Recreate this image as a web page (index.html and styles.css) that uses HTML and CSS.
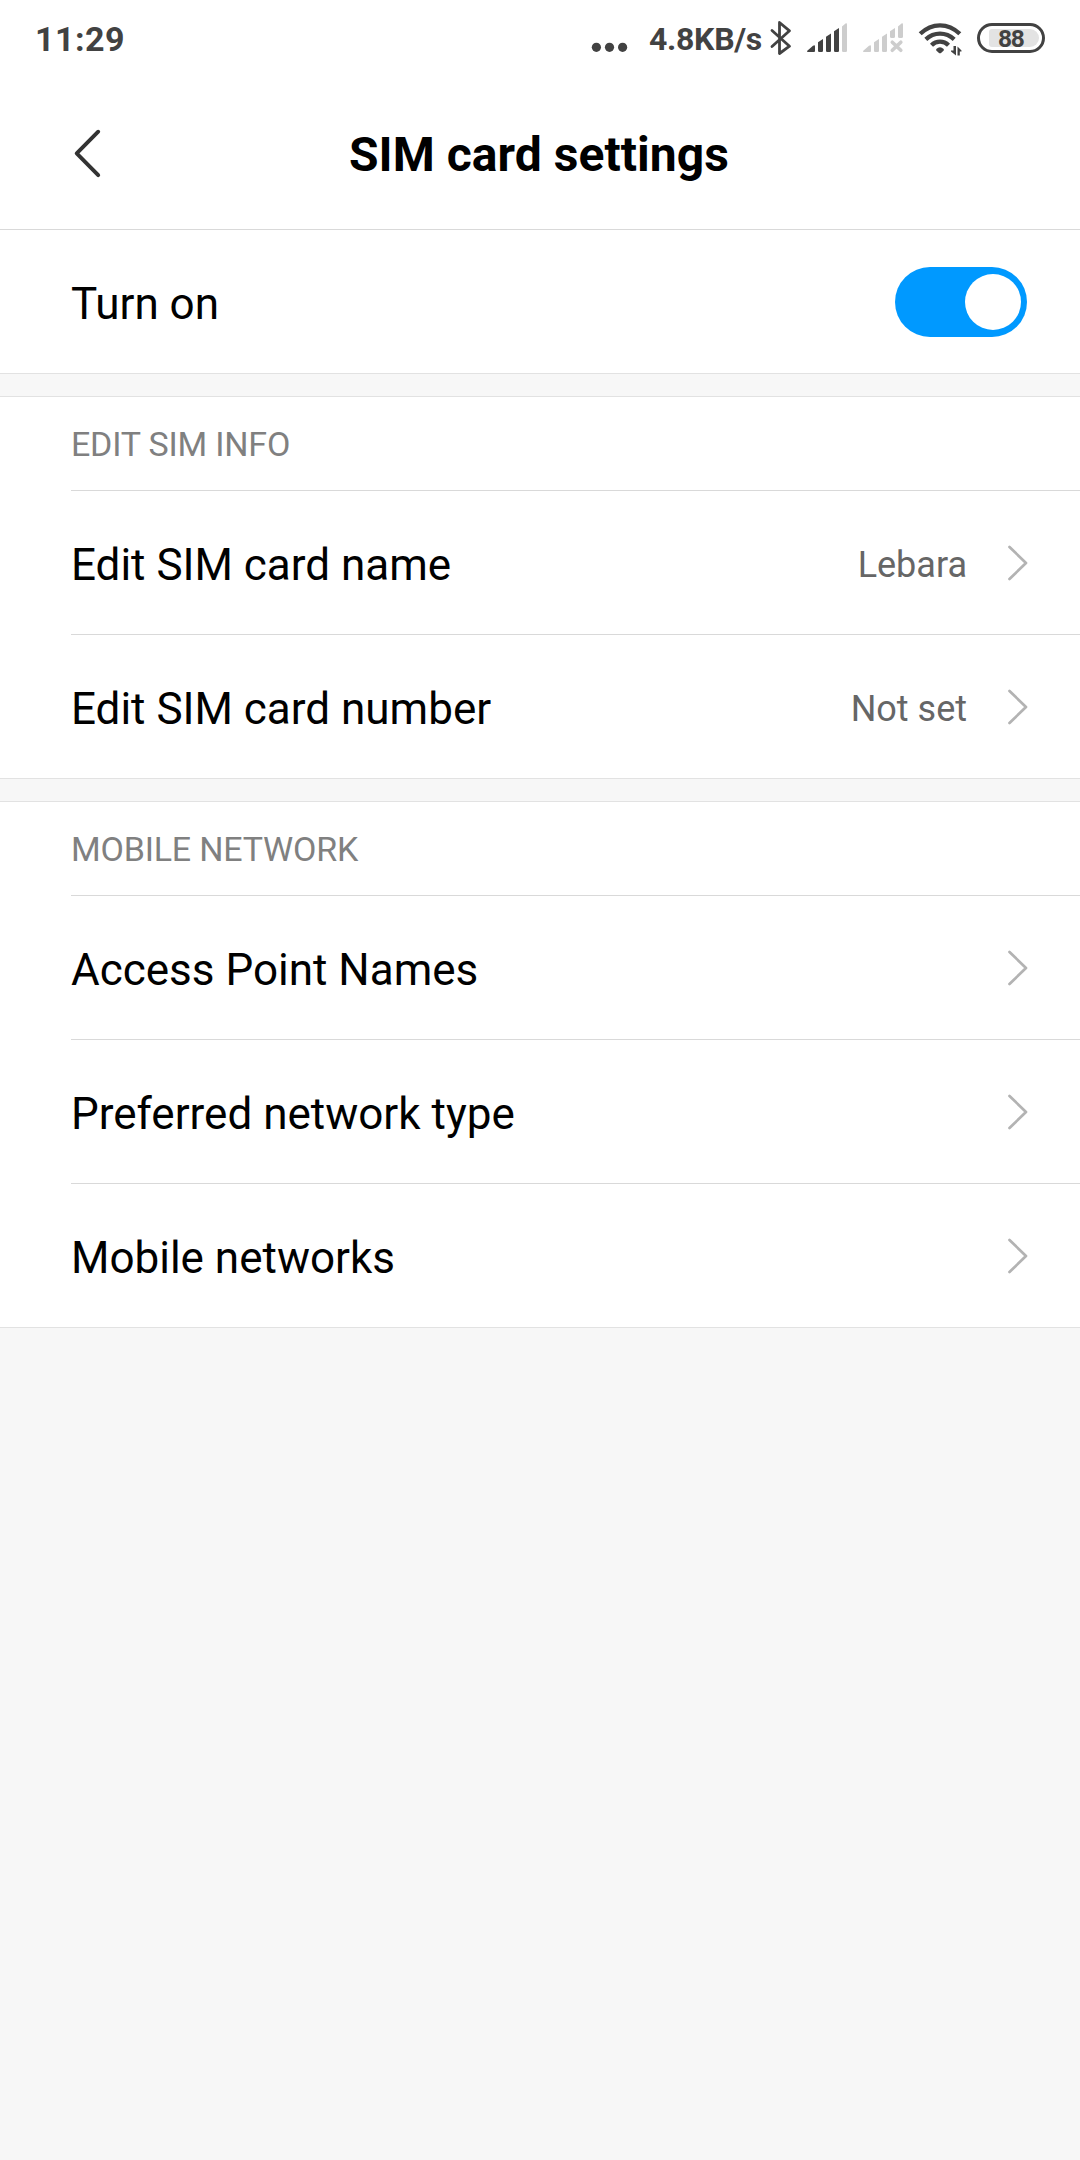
FILE: index.html
```html
<!DOCTYPE html>
<html lang="en">
<head>
<meta charset="utf-8">
<title>SIM card settings</title>
<link rel="stylesheet" href="styles.css">
</head>
<body>
<header class="top">
  <div class="status">
    <span class="time">11:29</span>
    <svg class="dots" viewBox="590 0 40 76" width="40" height="76"><g fill="#424242"><circle cx="596.4" cy="47.3" r="4.6"/><circle cx="609.5" cy="47.3" r="4.6"/><circle cx="622.6" cy="47.3" r="4.6"/></g></svg>
    <span class="speed">4.8KB/s</span>
    <svg viewBox="768 0 26 76" width="26" height="76"><path d="M772 30.500L789.500 46.200L779.500 53.500V22.500L789.500 30.800L772 46.500" fill="none" stroke="#424242" stroke-width="2.8" stroke-linejoin="round" stroke-linecap="round"/></svg>
    <svg class="signal" viewBox="806 0 42 76" width="42" height="76"><g fill="#424242"><path d="M807 51L813 45.8Q815 44.3 815 46.500V51Q815 52 814 52H807.800Q807 52 807 51Z"/><path d="M818 42.200L823 39V50.800Q823 52 821.800 52H819.200Q818 52 818 50.800Z"/><path d="M826 36.800L831 33.600V50.800Q831 52 829.800 52H827.200Q826 52 826 50.800Z"/><path d="M834 31.200L839 28V50.800Q839 52 837.800 52H835.200Q834 52 834 50.800Z"/></g><path fill="#cdcdcd" d="M842 26.500L845.500 23.500Q847 22.700 847 24.500V50.800Q847 52 845.800 52H843.200Q842 52 842 50.800Z"/></svg>
    <svg class="signal-off" viewBox="862 0 42 76" width="42" height="76"><g fill="#cdcdcd"><path d="M863 51L869 45.800Q871 44.300 871 46.500V51Q871 52 870 52H863.800Q863 52 863 51Z"/><path d="M874 42.200L879 39V50.800Q879 52 877.800 52H875.200Q874 52 874 50.800Z"/><path d="M882 36.800L887 33.600V50.800Q887 52 885.800 52H883.200Q882 52 882 50.800Z"/><path d="M890 31.200L895 28V36.500Q895 38 893.500 38H891.500Q890 38 890 36.500Z"/><path d="M898 26.500L901.500 23.500Q903 22.700 903 24.500V36.500Q903 38 901.500 38H899.500Q898 38 898 36.500Z"/></g><path d="M892.300 42.200L900.800 50.300M900.800 42.200L892.300 50.300" stroke="#cdcdcd" stroke-width="3.600" stroke-linecap="round"/></svg>
    <svg class="wifi" viewBox="918 0 46 76" width="46" height="76"><g fill="none" stroke="#424242" stroke-width="4.300"><path d="M920.200 33.800Q929 25.300 940 25.300T959.800 33.800"/><path d="M925.800 39.300Q932 33.600 940 33.600T954.200 39.300"/><path d="M931.500 45.200Q935 41.700 940 41.700T948.500 45.200"/></g><path fill="#424242" d="M936.300 49Q940 45.500 943.700 49Q944.200 50 943.500 50.700L941.300 52.700Q940 53.700 938.700 52.700L936.500 50.700Q935.800 50 936.300 49Z"/><path fill="#424242" d="M953.500 46H956V55.500L951 51.500V50.500H953.500ZM957.500 46.500L961.500 50.500V51.500H959.800V55.500H957.500Z"/></svg>
    <span class="battery"><span class="level">88</span></span>
  </div>
  <div class="titlebar">
    <svg class="back" viewBox="70 120 34 66" width="34" height="66"><path d="M98.200 131.700L76.700 153.400L98.200 175.200" fill="none" stroke="#333" stroke-width="3.900" stroke-linecap="round" stroke-linejoin="round"/></svg>
    <h1>SIM card settings</h1>
  </div>
</header>
<main>
  <section class="group">
    <div class="row"><span class="label">Turn on</span><span class="switch"><span class="knob"></span></span></div>
  </section>
  <section class="group">
    <h2>EDIT SIM INFO</h2>
    <div class="row lined"><span class="label">Edit SIM card name</span><span class="value">Lebara</span><svg class="chevron" viewBox="0 0 20 36" width="20" height="36"><path d="M2.500 2L19 18L2.500 34"/></svg></div>
    <div class="row lined"><span class="label">Edit SIM card number</span><span class="value">Not set</span><svg class="chevron" viewBox="0 0 20 36" width="20" height="36"><path d="M2.500 2L19 18L2.500 34"/></svg></div>
  </section>
  <section class="group">
    <h2>MOBILE NETWORK</h2>
    <div class="row lined"><span class="label">Access Point Names</span><svg class="chevron" viewBox="0 0 20 36" width="20" height="36"><path d="M2.500 2L19 18L2.500 34"/></svg></div>
    <div class="row lined"><span class="label">Preferred network type</span><svg class="chevron" viewBox="0 0 20 36" width="20" height="36"><path d="M2.500 2L19 18L2.500 34"/></svg></div>
    <div class="row lined"><span class="label">Mobile networks</span><svg class="chevron" viewBox="0 0 20 36" width="20" height="36"><path d="M2.500 2L19 18L2.500 34"/></svg></div>
  </section>
</main>
</body>
</html>
```
FILE: styles.css
```css
* { box-sizing: border-box; }
body { margin: 0; min-height: 2160px; background: #f7f7f7; color: #000; font-family: Roboto, sans-serif; }
h1, h2 { margin: 0; }
svg { display: block; flex: none; overflow: visible; }
.top { height: 230px; background: #fff; border-bottom: 1px solid #d9d9d9; }
.status { display: flex; height: 76px; padding: 0 35px 0 35px; color: #424242; font-weight: 700; line-height: 76px; white-space: nowrap; }
.time { flex: 1; font-size: 34px; letter-spacing: 0.500px; padding-top: 1px; }
.speed { width: 119px; margin-left: 19px; font-size: 32px; letter-spacing: -0.300px; padding-top: 1px; }
.signal { margin-left: 12px; }
.signal-off { margin-left: 14px; }
.wifi { margin-left: 14px; }
.battery { display: flex; width: 68px; height: 30px; margin: 23px 0 0 13px; padding: 3px; border: 3px solid #424242; border-radius: 15px; }
.level { flex: 1; margin: 0 0 0 6px; border-radius: 3px 9px 9px 3px; background: #e3e3e3; font-size: 24.500px; line-height: 19px; padding-left: 9px; letter-spacing: -1.300px; }
.titlebar { display: grid; grid-template-columns: 70px 34px 1fr 104px; height: 153px; align-items: start; padding-top: 44px; }
.back { grid-column: 2; }
h1 { grid-column: 3; font-size: 48px; line-height: 70px; letter-spacing: 0.060px; text-align: center; padding-right: 2px; }
.group { background: #fff; border-bottom: 1px solid #e2e2e2; }
.group + .group { margin-top: 22px; border-top: 1px solid #e2e2e2; }
h2 { height: 93px; padding-left: 71px; font-size: 34px; font-weight: 400; line-height: 94px; letter-spacing: -0.200px; color: #808080; }
.row { display: flex; align-items: center; height: 143px; padding-right: 53px; margin-left: 71px; }
.lined { height: 144px; border-top: 1px solid #d9d9d9; }
.label { flex: 1; padding-top: 5px; font-size: 44px; line-height: 60px; }
.value { margin-right: 40px; padding-top: 4px; font-size: 36px; color: #666; }
.chevron path { fill: none; stroke: #b3b3b3; stroke-width: 2.700; stroke-linecap: round; stroke-linejoin: round; }
.switch { width: 132px; height: 70px; padding: 7px 6px; border-radius: 35px; background: #0099ff; }
.knob { display: block; width: 56px; height: 56px; margin-left: auto; border-radius: 50%; background: #fff; }
```
